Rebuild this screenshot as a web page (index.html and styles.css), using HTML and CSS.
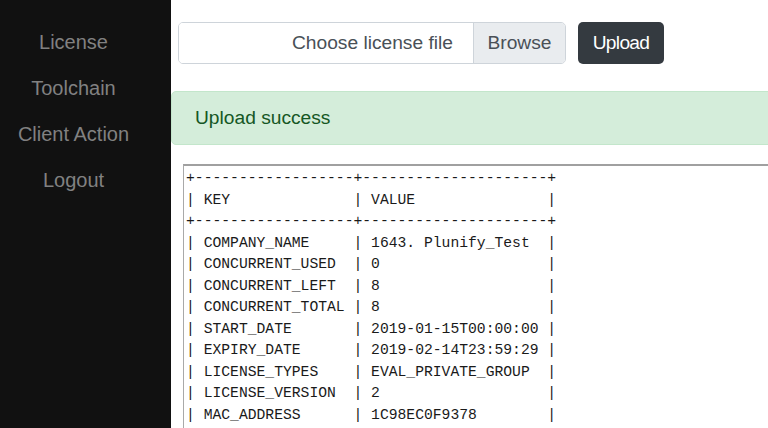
FILE: index.html
```html
<!DOCTYPE html>
<html>
<head>
<meta charset="utf-8">
<link rel="stylesheet" href="styles.css">
</head>
<body>
<div class="app">
  <nav class="sidebar">
    <a class="nav-item">License</a>
    <a class="nav-item">Toolchain</a>
    <a class="nav-item">Client Action</a>
    <a class="nav-item">Logout</a>
  </nav>
  <main class="main">
    <div class="upload-row">
      <div class="file-group">
        <span class="file-label">Choose license file</span>
        <span class="file-browse">Browse</span>
      </div>
      <button class="btn-upload">Upload</button>
    </div>
    <div class="alert">Upload success</div>
    <pre class="output">+------------------+---------------------+
| KEY              | VALUE               |
+------------------+---------------------+
| COMPANY_NAME     | 1643. Plunify_Test  |
| CONCURRENT_USED  | 0                   |
| CONCURRENT_LEFT  | 8                   |
| CONCURRENT_TOTAL | 8                   |
| START_DATE       | 2019-01-15T00:00:00 |
| EXPIRY_DATE      | 2019-02-14T23:59:29 |
| LICENSE_TYPES    | EVAL_PRIVATE_GROUP  |
| LICENSE_VERSION  | 2                   |
| MAC_ADDRESS      | 1C98EC0F9378        |
| USER_NAME        | plunify             |
+------------------+---------------------+</pre>
  </main>
</div>
</body>
</html>
```

FILE: styles.css
```css
html, body {
  margin: 0;
  padding: 0;
  height: 100%;
  overflow: hidden;
  background: #fff;
  font-family: "Liberation Sans", Arial, Helvetica, sans-serif;
}

.app {
  display: flex;
  height: 428px;
}

.sidebar {
  width: 147px;
  padding: 19px 24px 0 0;
  background: #111111;
  display: flex;
  flex-direction: column;
  flex: none;
}

.nav-item {
  display: block;
  text-align: center;
  font-size: 20px;
  line-height: 46px;
  color: #818181;
  text-decoration: none;
  white-space: nowrap;
}

.main {
  flex: 1;
  min-width: 0;
  overflow: hidden;
  display: flex;
  flex-direction: column;
  padding-top: 22px;
}

.upload-row {
  display: flex;
  align-items: stretch;
  margin-left: 7px;
  height: 42px;
  flex: none;
}

.file-group {
  display: flex;
  width: 388px;
  box-sizing: border-box;
  border: 1px solid #ced4da;
  border-radius: 5px;
  overflow: hidden;
  font-size: 19.2px;
  color: #495057;
}

.file-label {
  flex: 1;
  display: flex;
  align-items: center;
  justify-content: flex-end;
  padding-right: 20px;
  background: #fff;
}

.file-browse {
  display: flex;
  align-items: center;
  width: 92px;
  box-sizing: border-box;
  justify-content: center;
  background: #e9ecef;
  border-left: 1px solid #ced4da;
}

.btn-upload {
  margin-left: 12px;
  width: 86px;
  border: none;
  border-radius: 5px;
  background: #343a40;
  color: #fff;
  font-family: "Liberation Sans", Arial, Helvetica, sans-serif;
  font-size: 19.2px;
  letter-spacing: -0.7px;
  padding: 0;
}

.alert {
  margin-top: 27px;
  width: 660px;
  height: 54px;
  flex: none;
  box-sizing: border-box;
  display: flex;
  align-items: center;
  padding-left: 23px;
  background: #d4edda;
  border: 1px solid #c3e6cb;
  border-radius: 5px;
  color: #155724;
  font-size: 19.2px;
}

.output {
  margin: 19px 0 0 12px;
  width: 700px;
  flex: none;
  box-sizing: border-box;
  border: 1px solid #a9a9a9;
  border-top: 2px solid #a0a0a0;
  padding: 2px 2px;
  font-family: "Liberation Mono", "Courier New", monospace;
  font-size: 14.7px;
  line-height: 21.5px;
  color: #1a1a1a;
}
```
